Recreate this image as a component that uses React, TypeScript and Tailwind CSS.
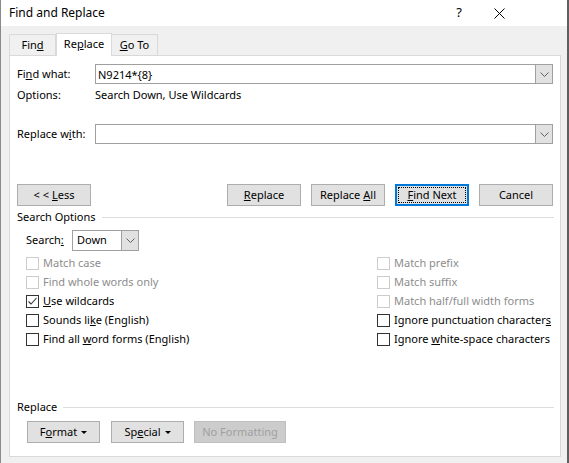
import React from "react";

const font = { fontFamily: '"Noto Sans", "Open Sans", sans-serif' };

function Chevron() {
  return (
    <svg width="9" height="5" viewBox="0 0 9 5" fill="none">
      <path d="M0.5 0.5 L4.5 4.5 L8.5 0.5" stroke="#606060" strokeWidth="1" />
    </svg>
  );
}

function Combo({ value, className }: { value?: string; className: string }) {
  return (
    <div className={`flex h-[20px] border border-[#a0a0a0] bg-white ${className}`}>
      <div className="flex flex-1 items-center pl-[2px] leading-none">{value}</div>
      <div className="flex w-[17px] items-center justify-center border-l border-[#a0a0a0] bg-[#e1e1e1]">
        <Chevron />
      </div>
    </div>
  );
}

function Btn({
  children,
  className = "",
  focused = false,
  disabled = false,
}: {
  children: React.ReactNode;
  className?: string;
  focused?: boolean;
  disabled?: boolean;
}) {
  if (focused) {
    return (
      <div className={`flex h-[22px] w-[74px] items-center justify-center border-2 border-[#0078d7] bg-[#e1e1e1] p-[1px] ${className}`}>
        <div className="flex h-full w-full items-center justify-center border border-dotted border-black">
          {children}
        </div>
      </div>
    );
  }
  return (
    <div
      className={`flex h-[22px] items-center justify-center border ${
        disabled ? "border-[#bfbfbf] bg-[#cccccc] text-[#a0a0a0]" : "border-[#adadad] bg-[#e1e1e1]"
      } ${className}`}
    >
      {children}
    </div>
  );
}

function Check({
  label,
  checked = false,
  disabled = false,
}: {
  label: React.ReactNode;
  checked?: boolean;
  disabled?: boolean;
}) {
  return (
    <div className="flex h-[19px] items-center whitespace-nowrap">
      <div
        className={`flex h-[13px] w-[13px] shrink-0 items-center justify-center border bg-white ${
          disabled ? "border-[#cccccc]" : "border-[#333333]"
        }`}
      >
        {checked && (
          <svg width="11" height="11" viewBox="0 0 11 11" fill="none">
            <path d="M1.5 5.5 L4 8 L9.5 2" stroke="#333" strokeWidth="1.1" />
          </svg>
        )}
      </div>
      <span className={`ml-[4px] ${disabled ? "text-[#8d8d8d]" : "text-black"}`}>{label}</span>
    </div>
  );
}

function Arrow() {
  return <span className="ml-[4px] inline-block border-x-[3px] border-t-[3px] border-x-transparent border-t-black" />;
}

export default function App() {
  return (
    <div
      className="flex h-[463px] w-[569px] flex-col border-l border-r-2 border-l-[#8a8a8a] border-r-[#5f5f5f] bg-[#f0f0f0] text-[11px] text-black"
      style={font}
    >
      {/* title bar */}
      <div className="flex h-[26px] items-center bg-white pl-[8px] text-[12px]">
        <span>Find and Replace</span>
        <span className="ml-auto mr-[32px] text-[13px]">?</span>
        <svg className="mr-[62px]" width="11" height="11" viewBox="0 0 11 11">
          <path d="M0.5 0.5 L10.5 10.5 M10.5 0.5 L0.5 10.5" stroke="#000" strokeWidth="1" />
        </svg>
      </div>

      {/* tabs */}
      <div className="flex items-end pl-[8px] pt-[7px]">
        <div className="flex h-[21px] w-[47px] items-center justify-center border border-b-0 border-[#d9d9d9]">
          Fin<u>d</u>
        </div>
        <div className="relative z-10 -mb-px flex h-[23px] w-[56px] items-center justify-center border border-b-0 border-[#d9d9d9] bg-white pb-[1px]">
          Re<u>p</u>lace
        </div>
        <div className="flex h-[21px] w-[46px] items-center justify-center border border-b-0 border-l-0 border-[#d9d9d9]">
          <u>G</u>o To
        </div>
      </div>

      {/* panel */}
      <div className="ml-[8px] flex w-[552px] flex-col border border-[#d9d9d9] bg-white pl-[7px] pt-[8px]">
        <div className="flex items-center">
          <span className="w-[78px]">
            Fi<u>n</u>d what:
          </span>
          <Combo value="N9214*{8}" className="w-[458px]" />
        </div>
        <div className="mt-[3px] flex h-[16px] items-center">
          <span className="w-[78px]">Options:</span>
          <span>Search Down, Use Wildcards</span>
        </div>
        <div className="mt-[21px] flex items-center">
          <span className="w-[78px]">
            Replace w<u>i</u>th:
          </span>
          <Combo className="w-[458px]" />
        </div>

        <div className="mt-[40px] flex">
          <Btn className="w-[74px]">
            &lt; &lt; <u className="ml-[3px]">L</u>ess
          </Btn>
          <div className="ml-auto mr-[7px] flex gap-[10px]">
            <Btn className="w-[74px]">
              <u>R</u>eplace
            </Btn>
            <Btn className="w-[74px]">
              Replace <u className="ml-[3px]">A</u>ll
            </Btn>
            <Btn focused>
              <u>F</u>ind Next
            </Btn>
            <Btn className="w-[74px]">Cancel</Btn>
          </div>
        </div>

        <div className="mt-[3px] flex h-[16px] items-center pr-[6px]">
          <span>Search Options</span>
          <div className="ml-[6px] h-px flex-1 bg-[#dcdcdc]" />
        </div>

        <div className="ml-[9px] mt-[5px] flex items-center">
          <span className="w-[46px]">
            Search<u>:</u>
          </span>
          <div className="flex h-[21px] w-[67px] border border-[#a0a0a0] bg-white">
            <div className="flex flex-1 items-center pl-[4px]">Down</div>
            <div className="flex w-[17px] items-center justify-center border-l border-[#a0a0a0] bg-[#e1e1e1]">
              <Chevron />
            </div>
          </div>
        </div>

        <div className="ml-[9px] mt-[3px] flex">
          <div className="flex w-[351px] shrink-0 flex-col">
            <Check label="Match case" disabled />
            <Check label="Find whole words only" disabled />
            <Check
              checked
              label={
                <>
                  <u>U</u>se wildcards
                </>
              }
            />
            <Check
              label={
                <>
                  Sounds li<u>k</u>e (English)
                </>
              }
            />
            <Check
              label={
                <>
                  Find all <u>w</u>ord forms (English)
                </>
              }
            />
          </div>
          <div className="flex flex-col">
            <Check label="Match prefix" disabled />
            <Check label="Match suffix" disabled />
            <Check label="Match half/full width forms" disabled />
            <Check
              label={
                <>
                  Ignore punctuation character<u>s</u>
                </>
              }
            />
            <Check
              label={
                <>
                  Ignore <u>w</u>hite-space characters
                </>
              }
            />
          </div>
        </div>

        <div className="mt-[50px] flex h-[16px] items-center pr-[6px]">
          <span>Replace</span>
          <div className="ml-[6px] h-px flex-1 bg-[#dcdcdc]" />
        </div>

        <div className="mb-[13px] ml-[10px] mt-[6px] flex gap-[11px]">
          <Btn className="w-[73px]">
            F<u>o</u>rmat
            <Arrow />
          </Btn>
          <Btn className="w-[73px]">
            Sp<u>e</u>cial
            <Arrow />
          </Btn>
          <Btn className="ml-[-1px] w-[92px]" disabled>
            No Formatting
          </Btn>
        </div>
      </div>
    </div>
  );
}
